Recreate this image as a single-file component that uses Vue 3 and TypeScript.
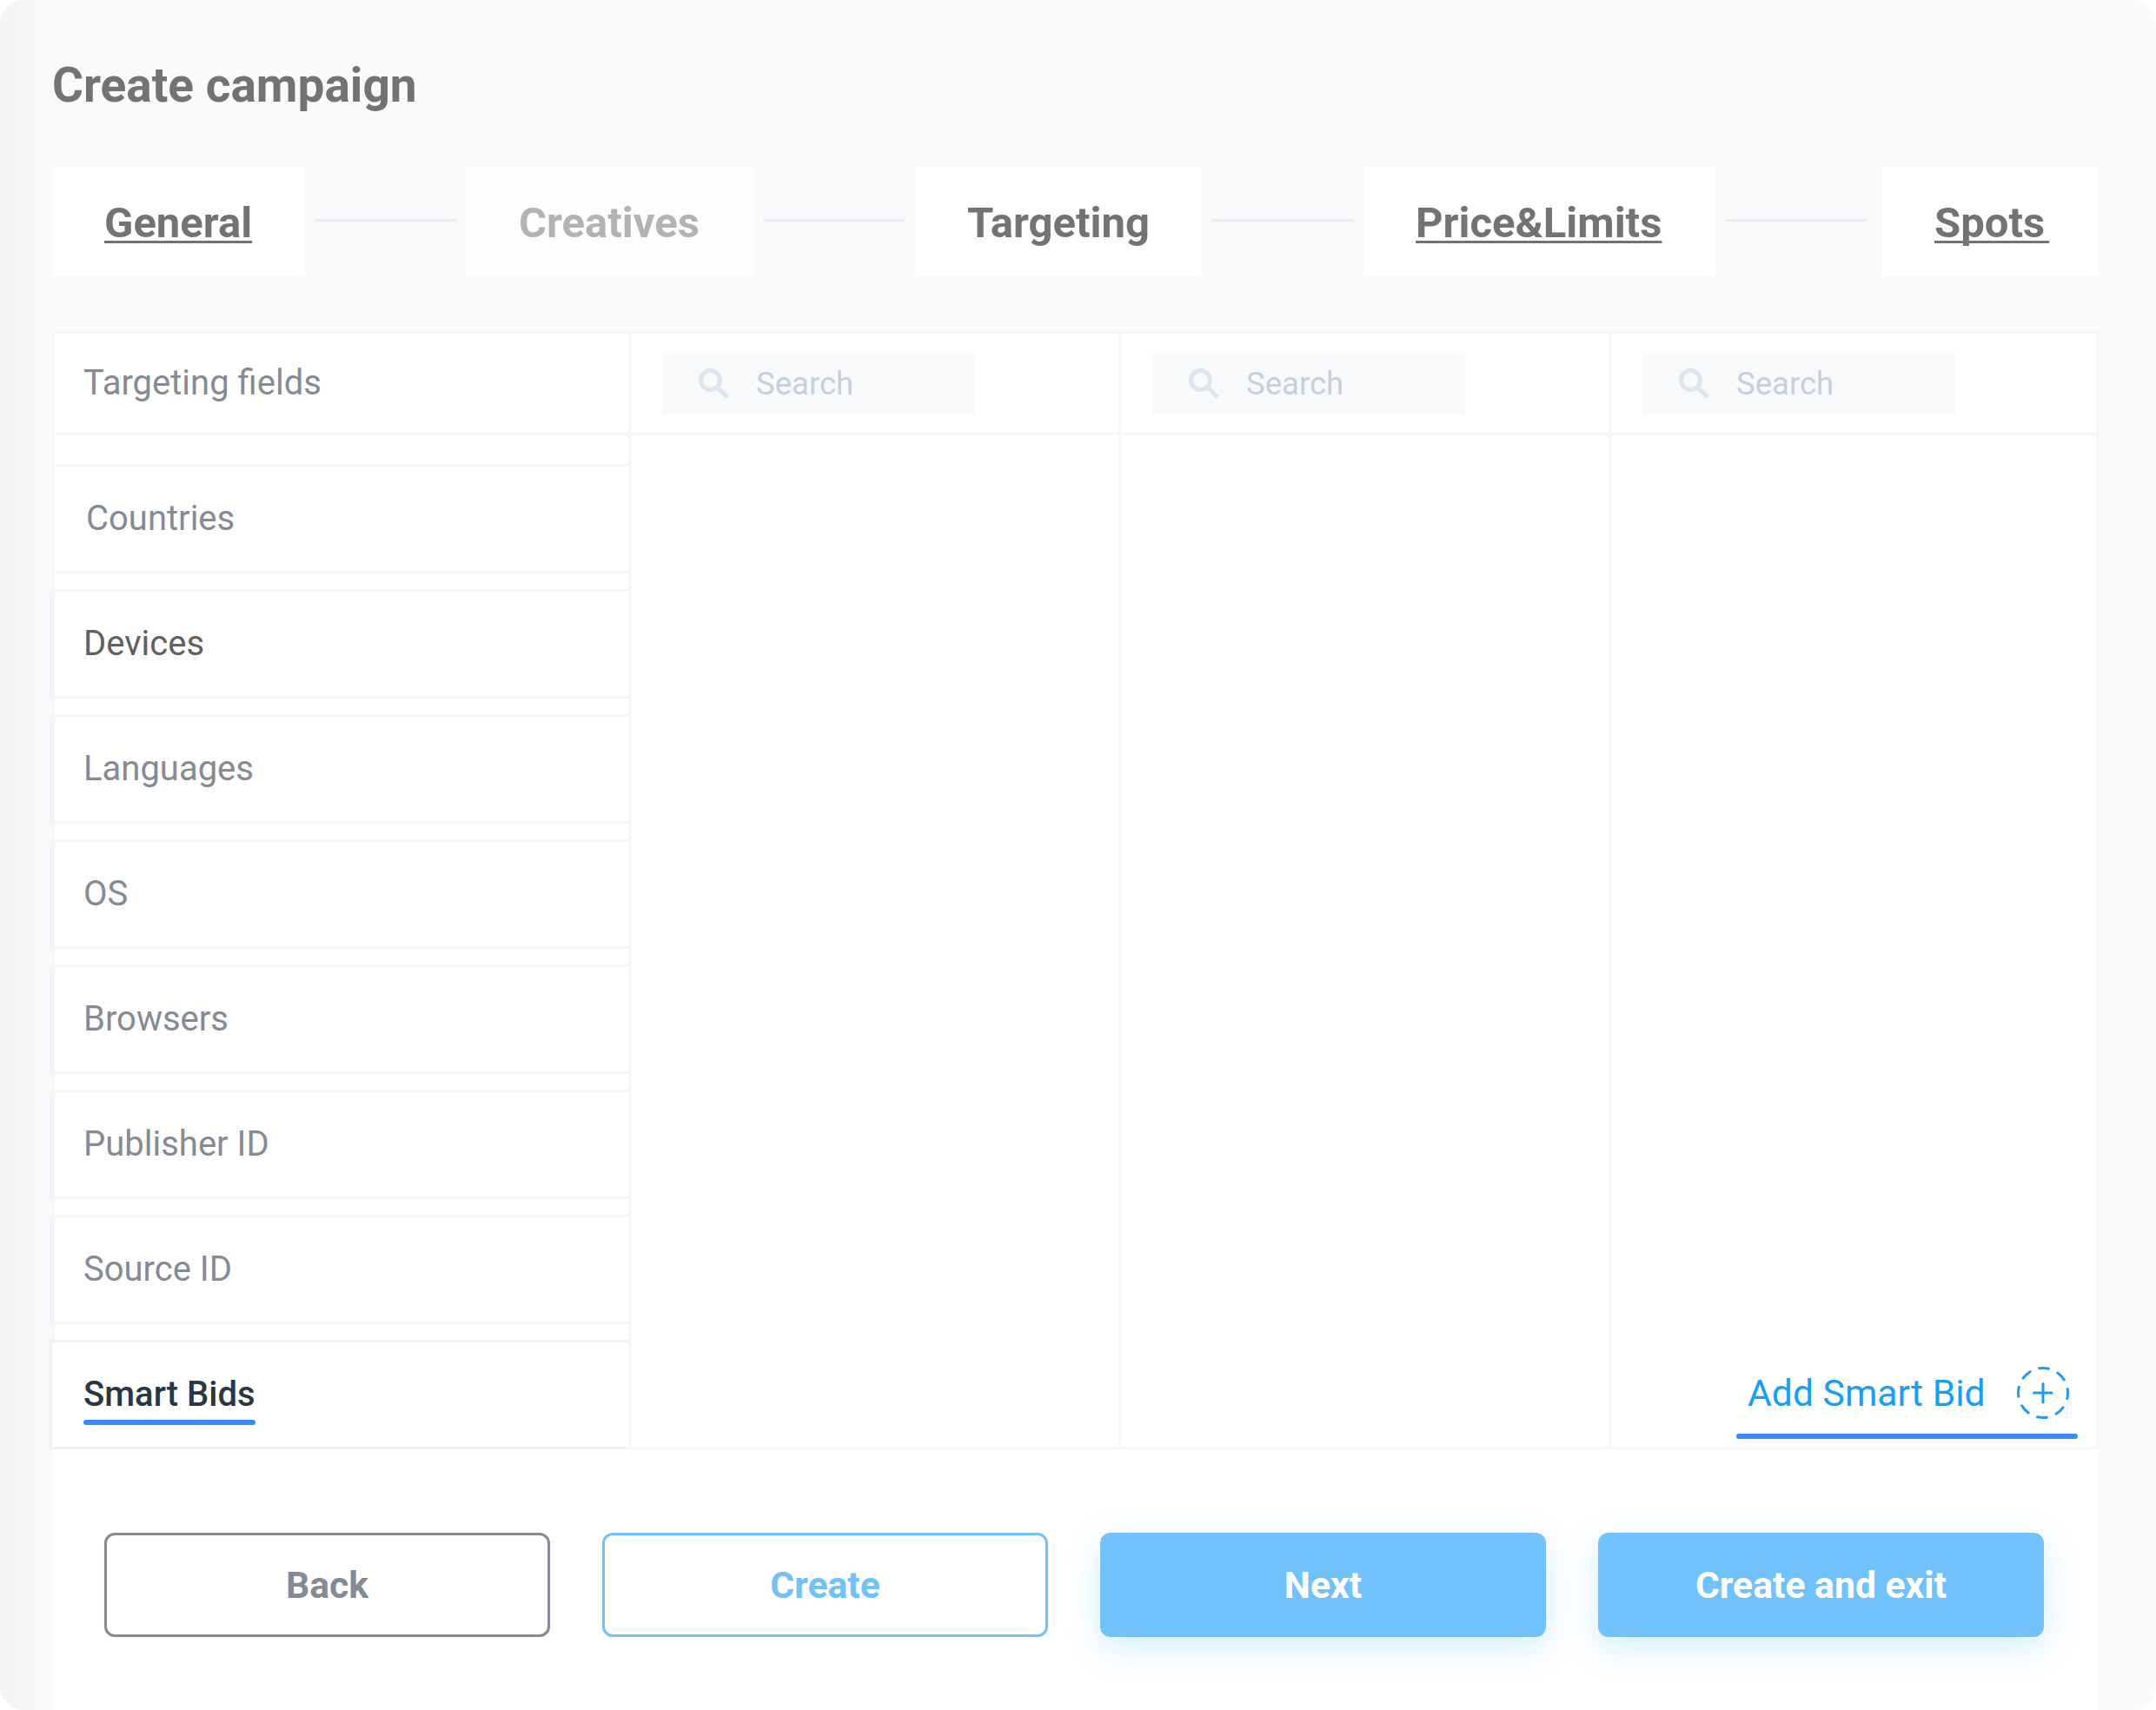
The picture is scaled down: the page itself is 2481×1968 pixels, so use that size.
<script setup lang="ts">
interface Step {
  label: string
  linked: boolean
  muted: boolean
  width: number
}

const steps: Step[] = [
  { label: 'General', linked: true, muted: false, width: 291 },
  { label: 'Creatives', linked: false, muted: true, width: 330 },
  { label: 'Targeting', linked: false, muted: false, width: 330 },
  { label: 'Price&Limits', linked: true, muted: false, width: 405 },
  { label: 'Spots\u200A', linked: true, muted: false, width: 249 },
]

const fields: string[] = ['Countries', 'Devices', 'Languages', 'OS', 'Browsers', 'Publisher ID', 'Source ID']
const searchColumns: number[] = [1, 2, 3]
</script>

<template>
  <div class="page">
    <h1 class="title">Create campaign</h1>

    <nav class="steps">
      <template v-for="(step, i) in steps" :key="step.label">
        <span v-if="i > 0" class="step-line"></span>
        <div
          class="step"
          :class="{ muted: step.muted, linked: step.linked }"
          :style="{ width: step.width + 'px' }"
        >
          <span class="step-text">{{ step.label }}</span>
        </div>
      </template>
    </nav>

    <section class="table">
      <div class="col col-fields">
        <div class="head head-fields">Targeting fields</div>
        <div class="field-list">
          <div
            v-for="(field, i) in fields"
            :key="field"
            class="field"
            :class="{ first: i === 0, strong: field === 'Devices' }"
          >
            <span>{{ field }}</span>
          </div>
          <div class="field active">
            <span class="active-label">Smart Bids</span>
          </div>
        </div>
      </div>

      <div v-for="n in searchColumns" :key="n" class="col col-search" :class="{ last: n === 3 }">
        <div class="head">
          <div class="search">
            <svg class="search-icon" viewBox="0 0 35 35" width="35" height="35" fill="none">
              <circle cx="13.5" cy="13.5" r="11" stroke="#dde5ef" stroke-width="5" />
              <path d="M21.5 21.5L33 33" stroke="#dde5ef" stroke-width="5" />
            </svg>
            <span class="search-text">Search</span>
          </div>
        </div>
        <div class="col-body">
          <div v-if="n === 3" class="add">
            <span class="add-text">Add Smart Bid</span>
            <svg class="add-icon" viewBox="0 0 60 60" width="60" height="60" fill="none">
              <circle
                cx="30"
                cy="30"
                r="28.5"
                stroke="#1f9df6"
                stroke-width="3"
                stroke-linecap="round"
                stroke-dasharray="11 11.38"
                transform="rotate(-99 30 30)"
              />
              <path d="M30 19.5V41M19.5 30H40" stroke="#1f9df6" stroke-width="3" stroke-linecap="round" />
            </svg>
          </div>
        </div>
      </div>
    </section>

    <footer class="actions">
      <button type="button" class="btn btn-back">Back</button>
      <button type="button" class="btn btn-outline">Create</button>
      <button type="button" class="btn btn-fill">Next</button>
      <button type="button" class="btn btn-fill">Create and exit</button>
    </footer>
  </div>
</template>

<style>
html,
body {
  margin: 0;
  background: #ffffff;
}
</style>

<style scoped>
.page {
  box-sizing: border-box;
  width: 2481px;
  height: 1968px;
  padding: 66px 66px 0 60px;
  display: flex;
  flex-direction: column;
  border-radius: 27px;
  overflow: hidden;
  background: linear-gradient(90deg, #f3f4f6 0, #f9fafc 60px);
  font-family: Roboto, "Liberation Sans", sans-serif;
}

.title {
  margin: 0 0 62px;
  font-size: 55px;
  line-height: 64px;
  font-weight: 700;
  color: #737373;
}

.steps {
  display: flex;
  align-items: flex-start;
  height: 126px;
  margin-bottom: 63px;
}

.step {
  box-sizing: border-box;
  flex: none;
  height: 126px;
  padding: 2px 0 0 60px;
  display: flex;
  align-items: center;
  background: #ffffff;
  font-size: 49px;
  font-weight: 700;
  color: #737373;
  white-space: nowrap;
}

.step.muted {
  background: #fdfefe;
  color: #b3b3b3;
}

.step.linked .step-text {
  text-decoration: underline;
  text-decoration-thickness: 3px;
  text-decoration-skip-ink: none;
  text-underline-offset: 4px;
}

.step-line {
  flex: none;
  width: 162px;
  height: 3px;
  margin: 60px 12px 0;
  background: #e9ebee;
}

.step-line:last-of-type {
  margin-right: 18px;
}

.table {
  display: flex;
  height: 1287px;
  border-top: 3px solid #f5f6f8;
  box-sizing: border-box;
}

.col {
  box-sizing: border-box;
  display: flex;
  flex-direction: column;
  background: #ffffff;
  border-right: 3px solid #f5f6f8;
}

.col-fields {
  width: 666px;
  border-left: 3px solid #f5f6f8;
}

.col-search {
  width: 564px;
}

.col-search.last {
  width: 561px;
}

.head {
  box-sizing: border-box;
  flex: none;
  height: 117px;
  padding: 21px 0 21px 36px;
  border-bottom: 3px solid #f5f6f8;
}

.head-fields {
  display: flex;
  align-items: center;
  padding: 0 0 1px 33px;
  font-size: 40px;
  color: #858b94;
}

.field-list {
  flex: 1;
  display: flex;
  flex-direction: column;
  gap: 18px;
  padding-top: 33px;
}

.field {
  box-sizing: border-box;
  height: 126px;
  padding: 0 0 1px 33px;
  margin-left: -6px;
  display: flex;
  align-items: center;
  border-top: 3px solid #f4f5f8;
  border-bottom: 3px solid #f4f5f8;
  border-left: 6px solid #f3f5f8;
  background: #ffffff;
  font-size: 40px;
  color: #858b94;
}

.field.first {
  margin-left: 0;
  padding-left: 36px;
  border-left: 0;
}

.field.strong {
  color: #606060;
}

.field.active {
  margin-left: -6px;
  padding-left: 36px;
  padding-bottom: 2px;
  border: 3px solid #eff2f5;
  border-right: 0;
  color: #2c3643;
  font-weight: 500;
}

.active-label {
  position: relative;
}

.active-label::after {
  content: "";
  position: absolute;
  left: 0;
  right: 0;
  bottom: -12px;
  height: 6px;
  border-radius: 3px;
  background: #338ef7;
}

.search {
  box-sizing: border-box;
  width: 360px;
  height: 72px;
  padding-left: 42px;
  display: flex;
  align-items: center;
  gap: 31px;
  background: #f8f9fb;
}

.search-icon {
  flex: none;
}

.search-text {
  font-size: 36.5px;
  color: #c5d0df;
}

.col-body {
  flex: 1;
  display: flex;
  flex-direction: column;
  justify-content: flex-end;
  border-bottom: 3px solid #f5f6f8;
}

.add {
  position: relative;
  box-sizing: border-box;
  align-self: flex-end;
  width: 393px;
  margin: 0 21px 9px 0;
  padding: 0 10px 23px 13px;
  display: flex;
  align-items: center;
  justify-content: space-between;
}

.add::after {
  content: "";
  position: absolute;
  left: 0;
  right: 0;
  bottom: 0;
  height: 6px;
  border-radius: 3px;
  background: #338ef7;
}

.add-text {
  font-size: 42.7px;
  color: #159ff5;
}

.actions {
  flex: 1;
  display: flex;
  gap: 60px;
  width: 2355px;
  box-sizing: border-box;
  padding: 96px 60px 0;
  background: #ffffff;
}

.btn {
  box-sizing: border-box;
  width: 513px;
  height: 120px;
  border-radius: 12px;
  font-family: inherit;
  font-size: 42.7px;
  font-weight: 700;
  background: #ffffff;
  padding: 0;
}

.btn-back {
  border: 3px solid #858b94;
  color: #858b94;
}

.btn-outline {
  border: 3px solid #71c2fa;
  color: #71c2fa;
}

.btn-fill {
  border: 0;
  color: #ffffff;
  background: #71c2fa;
  box-shadow: 0 12px 36px rgba(113, 194, 250, 0.3);
}
</style>
